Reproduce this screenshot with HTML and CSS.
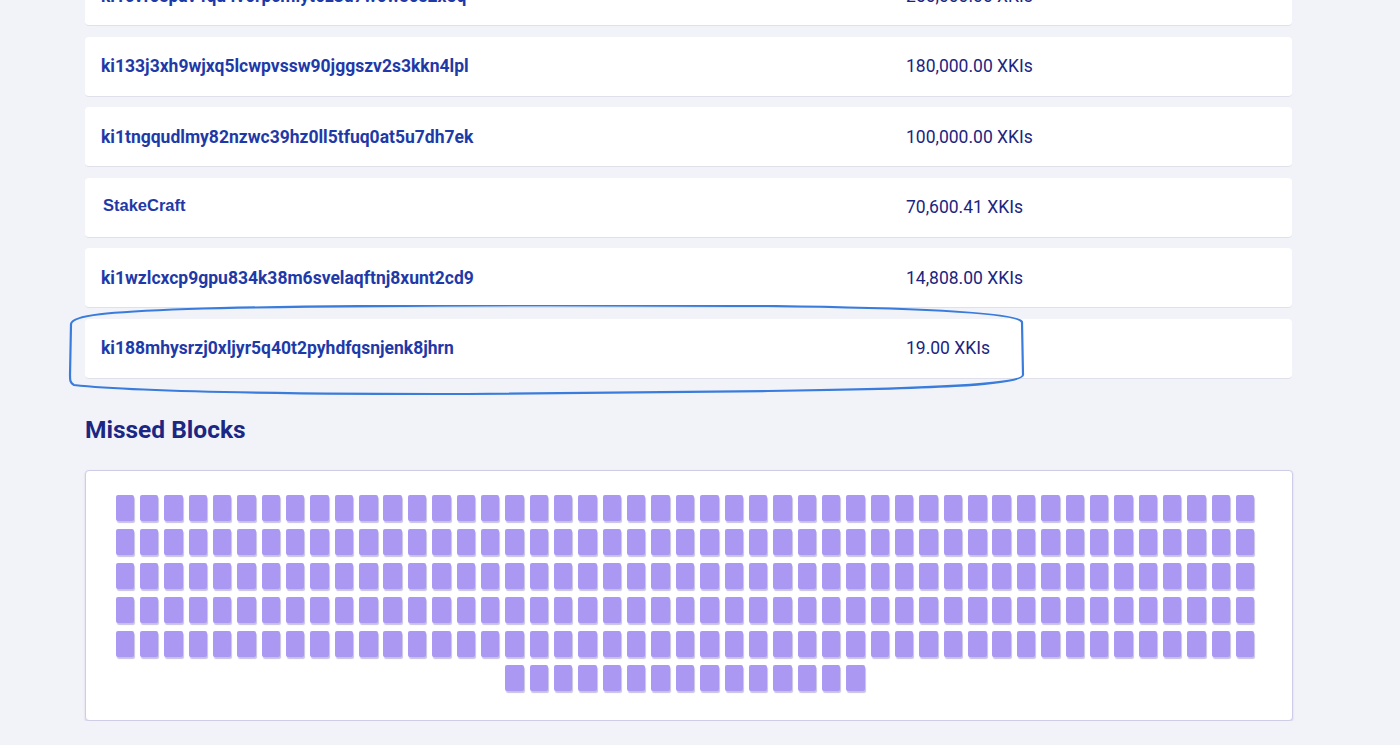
FILE: index.html
```html
<!DOCTYPE html>
<html>
<head>
<meta charset="utf-8">
<link rel="stylesheet" href="styles.css">
</head>
<body>
<main class="page">
  <section class="delegations">
    <div class="row"><span class="addr">ki1cvf6spav4qu4v6rpcmlyt6z3d7w6ws6s2x5q</span><span class="amount">250,000.00 XKIs</span></div>
    <div class="row"><span class="addr">ki133j3xh9wjxq5lcwpvssw90jggszv2s3kkn4lpl</span><span class="amount">180,000.00 XKIs</span></div>
    <div class="row"><span class="addr">ki1tngqudlmy82nzwc39hz0ll5tfuq0at5u7dh7ek</span><span class="amount">100,000.00 XKIs</span></div>
    <div class="row"><span class="addr brand">StakeCraft</span><span class="amount">70,600.41 XKIs</span></div>
    <div class="row"><span class="addr">ki1wzlcxcp9gpu834k38m6svelaqftnj8xunt2cd9</span><span class="amount">14,808.00 XKIs</span></div>
    <div class="row highlighted"><span class="addr">ki188mhysrzj0xljyr5q40t2pyhdfqsnjenk8jhrn</span><span class="amount">19.00 XKIs</span>
      <svg class="circle" width="980" height="100" viewBox="0 0 980 100" aria-hidden="true">
        <path d="M 3 19 C 4 10, 40 7, 120 4 C 260 0, 520 0, 700 1 C 850 3, 950 8, 954 17 L 955 70 C 954 80, 860 84, 700 86 L 400 89 C 200 89, 60 86, 6 80 C 2 78, 2 75, 2 70 Z" fill="none" stroke="#3a7cdc" stroke-width="2.2" stroke-linejoin="round"/>
      </svg>
    </div>
  </section>

  <h2 class="section-title">Missed Blocks</h2>
  <section class="blocks-card">
    <div class="blocks" id="blocks"></div>
  </section>
</main>
<script>
  var b = document.getElementById('blocks');
  var html = '';
  for (var i = 0; i < 250; i++) html += '<span class="block"></span>';
  b.innerHTML = html;
</script>
</body>
</html>
```
FILE: styles.css
```css
html, body {
  margin: 0;
  padding: 0;
  background: #f2f3f8;
}
body {
  font-family: Roboto, "Liberation Sans", sans-serif;
  overflow: hidden;
}
.page {
  width: 1208px;
  margin-left: 85px;
  margin-top: -34px;
}
.delegations {
  display: flex;
  flex-direction: column;
  gap: 10.6px;
  width: 1207px;
}
.row {
  position: relative;
  height: 60px;
  box-sizing: border-box;
  background: #ffffff;
  border-radius: 4px;
  border-bottom: 1px solid #dfe0e9;
  display: grid;
  grid-template-columns: 805px 1fr;
  align-items: center;
  padding-left: 16px;
}
.addr {
  font-weight: 700;
  font-size: 17.5px;
  color: #1e3aa8;
}
.brand {
  font-family: "Liberation Sans", Arial, sans-serif;
  font-size: 16.5px;
  padding-left: 2px;
  margin-top: -3px;
  color: #1f3aa6;
}
.amount {
  font-size: 17.5px;
  color: #1b2580;
}
.circle {
  position: absolute;
  left: -17px;
  top: -14px;
  pointer-events: none;
}
.section-title {
  margin: 37px 0 0 0;
  font-size: 24.5px;
  line-height: 28px;
  font-weight: 700;
  color: #1c2683;
}
.blocks-card {
  margin-top: 26px;
  box-sizing: border-box;
  width: 1208px;
  background: #ffffff;
  border: 1px solid #cfcce8;
  border-radius: 4px;
  box-shadow: 0 1px 2px rgba(140, 130, 200, 0.35);
  padding: 20px 34px 25px 26px;
}
.blocks {
  display: flex;
  flex-wrap: wrap;
  justify-content: center;
}
.block {
  width: 18.4px;
  height: 26px;
  margin: 4px 2.985px;
  background: #ab98f2;
  border-radius: 2px;
  box-shadow: 1px 2px 1px rgba(110, 95, 180, 0.38);
}
```
